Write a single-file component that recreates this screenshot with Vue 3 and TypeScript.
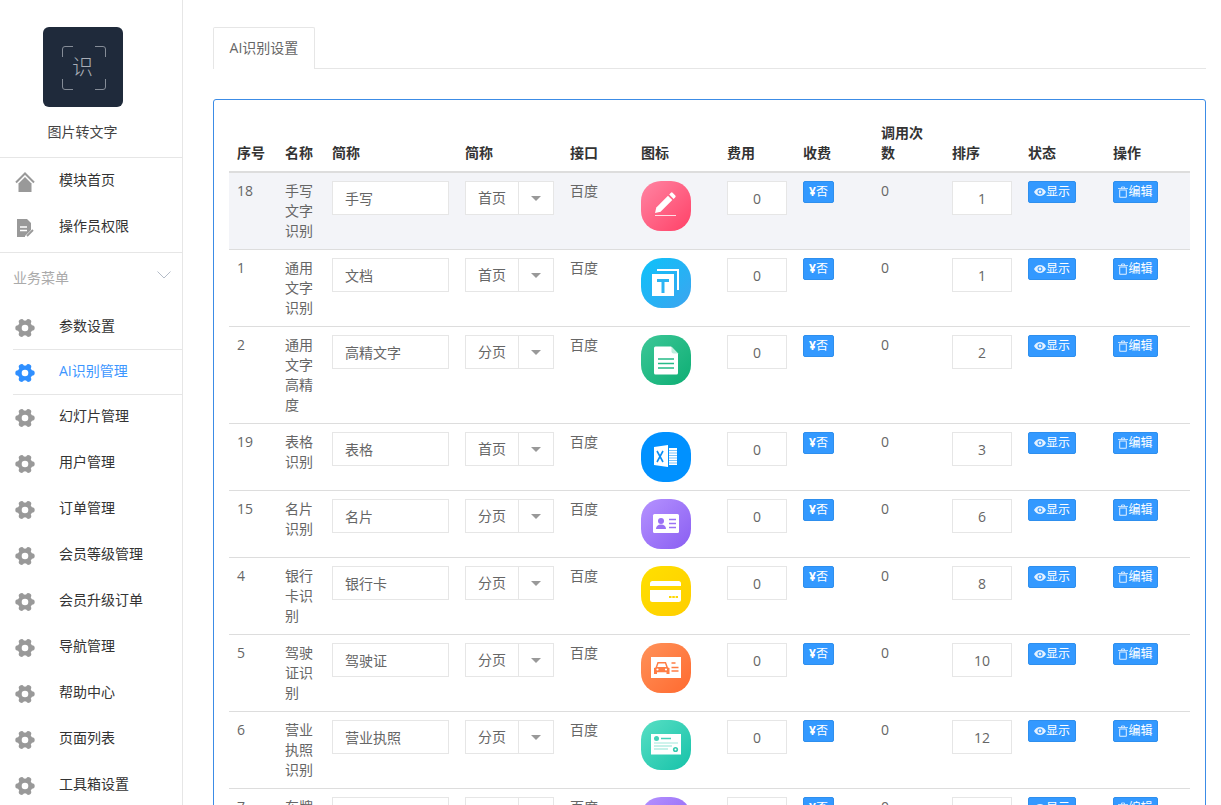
<script setup lang="ts">
interface Row {
  id: number
  name: string
  short: string
  page: string
  icon: string
  sort: number
}

const rows: Row[] = [
  { id: 18, name: '手写文字识别', short: '手写', page: '首页', icon: 'pen', sort: 1 },
  { id: 1, name: '通用文字识别', short: '文档', page: '首页', icon: 'text', sort: 1 },
  { id: 2, name: '通用文字高精度', short: '高精文字', page: '分页', icon: 'doc', sort: 2 },
  { id: 19, name: '表格识别', short: '表格', page: '首页', icon: 'excel', sort: 3 },
  { id: 15, name: '名片识别', short: '名片', page: '分页', icon: 'card', sort: 6 },
  { id: 4, name: '银行卡识别', short: '银行卡', page: '分页', icon: 'bank', sort: 8 },
  { id: 5, name: '驾驶证识别', short: '驾驶证', page: '分页', icon: 'car', sort: 10 },
  { id: 6, name: '营业执照识别', short: '营业执照', page: '分页', icon: 'biz', sort: 12 },
  { id: 7, name: '车牌识别', short: '车牌', page: '分页', icon: 'plate', sort: 14 }
]

const menu = ['参数设置', 'AI识别管理', '幻灯片管理', '用户管理', '订单管理', '会员等级管理', '会员升级订单', '导航管理', '帮助中心', '页面列表', '工具箱设置']
const columns = ['序号', '名称', '简称', '简称', '接口', '图标', '费用', '收费', '调用次数', '排序', '状态', '操作']
const widths = [48, 47, 133, 105, 71, 86, 76, 78, 71, 76, 85, 85]
const lobes = [0, 60, 120, 180, 240, 300]
</script>

<template>
  <div class="page">
    <aside class="side">
      <div class="brand">
        <div class="logo">
          <svg class="logo-frame" viewBox="0 0 44 44" fill="none" stroke="#858c97" stroke-width="1">
            <path d="M.5 11V3a2.5 2.5 0 0 1 2.500-2.500H11M33 .5h8A2.500 2.500 0 0 1 43.500 3v8M43.500 33v8a2.500 2.500 0 0 1-2.500 2.500H33M11 43.500H3A2.500 2.500 0 0 1 .5 41v-8" />
          </svg>
          <span class="logo-char">识</span>
        </div>
        <div class="brand-name">图片转文字</div>
      </div>

      <div class="group">
        <div class="item">
          <svg class="mi" viewBox="0 0 20 20">
            <path d="M1 10.500 10 1.500l9 9" fill="none" stroke="#999" stroke-width="2" />
            <path d="M3.500 11.500 10 5l6.500 6.500V20h-13z" fill="#999" />
          </svg>
          <span class="lbl">模块首页</span>
        </div>
        <div class="item">
          <svg class="mi" viewBox="0 0 20 20">
            <path d="M2 1h10l4 4v7l-6 6v1H2z" fill="#999" />
            <path d="M5 9h7M5 12.500h7" stroke="#fff" stroke-width="1.500" />
            <path d="M12 18l6-6" stroke="#999" stroke-width="1.800" />
          </svg>
          <span class="lbl">操作员权限</span>
        </div>
      </div>

      <div class="section">
        <span class="sec-lbl">业务菜单</span>
        <svg class="chev" viewBox="0 0 14 8" fill="none" stroke="#b4bcc8" stroke-width="1">
          <path d="M.5.5 7 7l6.500-6.500" />
        </svg>
      </div>

      <div
        v-for="(label, i) in menu"
        :key="label"
        class="item"
        :class="{ active: i === 1, after: i === 2 }"
      >
        <svg class="mi" viewBox="0 0 20 20">
          <circle cx="10" cy="10" r="7.400" />
          <circle v-for="a in lobes" :key="a" cx="10" cy="10" r="2.700" :transform="`rotate(${a} 10 10) translate(7 0)`" />
          <circle class="hole" cx="10" cy="10" r="3.300" />
        </svg>
        <span class="lbl">{{ label }}</span>
      </div>
    </aside>

    <main class="main">
      <div class="tabs">
        <div class="tab">AI识别设置</div>
      </div>

      <section class="card">
        <table class="grid">
          <colgroup>
            <col v-for="(w, i) in widths" :key="i" :width="w" />
          </colgroup>
          <thead>
            <tr>
              <th v-for="(c, i) in columns" :key="i">{{ c }}</th>
            </tr>
          </thead>
          <tbody>
            <tr v-for="r in rows" :key="r.id">
              <td>{{ r.id }}</td>
              <td>{{ r.name }}</td>
              <td><input class="field wide" :value="r.short" /></td>
              <td>
                <div class="select">
                  <span class="select-val">{{ r.page }}</span>
                  <span class="select-btn"><i class="caret"></i></span>
                </div>
              </td>
              <td>百度</td>
              <td>
                <div class="app" :class="`app-${r.icon}`">
                  <svg viewBox="0 0 50 50" width="50" height="50">
                    <g v-if="r.icon === 'pen'">
                      <path d="M14 32l1.300-5.600L27 14.700l4.300 4.300L19.600 30.700z" fill="#fff" />
                      <path d="M28.200 13.500l1.700-1.700a1.200 1.200 0 0 1 1.700 0l2.700 2.700a1.200 1.200 0 0 1 0 1.700l-1.700 1.700z" fill="#fff" />
                      <path d="M14 34.500h21" stroke="#fff" stroke-opacity=".8" stroke-width="1.200" />
                    </g>
                    <g v-else-if="r.icon === 'text'">
                      <path d="M16 12h21v20" fill="none" stroke="#fff" stroke-width="2" />
                      <rect x="11" y="16" width="22" height="22" fill="#fff" />
                      <path d="M16 21h12v3h-4.500v11h-3V24H16z" fill="#2bb4f4" />
                    </g>
                    <g v-else-if="r.icon === 'doc'">
                      <path d="M13 13a1.500 1.500 0 0 1 1.500-1.500H30l7 7V38a1.500 1.500 0 0 1-1.500 1.500h-21A1.500 1.500 0 0 1 13 38z" fill="#fff" />
                      <path d="M30.500 11.500v5a2 2 0 0 0 2 2h4.500z" fill="#bfeedd" />
                      <path d="M17 24h16M17 28.500h16M17 33h16" stroke="#25bb87" stroke-width="1.500" />
                    </g>
                    <g v-else-if="r.icon === 'excel'">
                      <path d="M13 15l14-2v22l-14-2z" fill="#fff" />
                      <path d="M16 19l6 11M22 19l-6 11" stroke="#0b8ff5" stroke-width="1.600" />
                      <path d="M28 16h8v17h-8z" fill="#fff" />
                      <path d="M28 18.500h8M28 21h8M28 23.500h8M28 26h8M28 28.500h8M28 31h8" stroke="#7cc4fb" stroke-width="1" />
                    </g>
                    <g v-else-if="r.icon === 'card' || r.icon === 'plate'">
                      <rect x="12" y="15" width="26" height="19" rx="1.500" fill="#fff" />
                      <circle cx="20" cy="22" r="3" fill="#9a71f5" />
                      <path d="M15 30c0-3 2-4.500 5-4.500s5 1.500 5 4.500z" fill="#9a71f5" />
                      <path d="M28 20.500h7M28 24.500h7M28 28.500h7" stroke="#9a71f5" stroke-width="1.500" />
                    </g>
                    <g v-else-if="r.icon === 'bank'">
                      <rect x="9" y="15" width="31" height="21" rx="2.500" fill="#fff" />
                      <rect x="9" y="20" width="31" height="4" fill="#ffd800" />
                      <path d="M28 31h9" stroke="#ffd800" stroke-width="2" stroke-dasharray="2.500 .8" />
                    </g>
                    <g v-else-if="r.icon === 'car'">
                      <rect x="10" y="14" width="30" height="21" fill="#fff" />
                      <path d="M13 31v-6l1.500-.5 2-5.500h8.500l2 5.500 1.500.5v6h-3v-1.800h-9.500V31z" fill="#ff7d45" />
                      <path d="M17.500 20.500h6.500l1.200 3.500h-9z" fill="#fff" />
                      <circle cx="16.500" cy="26.500" r="1.100" fill="#fff" />
                      <circle cx="25" cy="26.500" r="1.100" fill="#fff" />
                      <path d="M30.500 20h4M30.500 24.500h7M30.500 28h7" stroke="#ff7d45" stroke-width="1.400" />
                    </g>
                    <g v-else>
                      <rect x="10" y="14" width="30" height="20.500" fill="#fff" />
                      <circle cx="15.500" cy="18.500" r="2.500" fill="#45d2b8" />
                      <path d="M20 18.500h10" stroke="#45d2b8" stroke-width="1.500" />
                      <path d="M13 23h24" stroke="#9fe8da" stroke-width="1" />
                      <path d="M13 26h18M13 29h14" stroke="#c6f1e9" stroke-width="2" />
                      <circle cx="34.500" cy="29.500" r="2.600" fill="#35c9ae" />
                      <circle cx="34.500" cy="29.500" r="1" fill="#fff" />
                    </g>
                  </svg>
                </div>
              </td>
              <td><input class="field num" value="0" /></td>
              <td><span class="btn btn-fee"><b>¥</b>否</span></td>
              <td>0</td>
              <td><input class="field num" :value="r.sort" /></td>
              <td>
                <span class="btn btn-show">
                  <svg class="bi" viewBox="0 0 12 10" width="12" height="10">
                    <path fill-rule="evenodd" d="M0 5c1.500-2.700 3.500-4 6-4s4.500 1.300 6 4c-1.500 2.700-3.500 4-6 4S1.500 7.700 0 5zm6-2.500a2.500 2.500 0 1 0 0 5 2.500 2.500 0 0 0 0-5z" fill="#e4f1ff" />
                    <circle cx="6" cy="5" r="1.400" fill="#e4f1ff" />
                  </svg>显示
                </span>
              </td>
              <td>
                <span class="btn btn-edit">
                  <svg class="bi" viewBox="0 0 10 12" width="10" height="12">
                    <path d="M0 2.500h10M3.500 2.500V1h3v1.500" fill="none" stroke="#e4f1ff" stroke-width=".8" />
                    <path d="M1.200 3.500h7.600V11a.8.8 0 0 1-.8.8H2a.8.8 0 0 1-.8-.8zM2.200 4.500v6.300h5.600V4.500z" fill="#e4f1ff" fill-rule="evenodd" />
                  </svg>编辑
                </span>
              </td>
            </tr>
          </tbody>
        </table>
      </section>
    </main>
  </div>
</template>

<style>
html,
body {
  margin: 0;
  overflow: hidden;
  background: #fff;
}
</style>

<style scoped>
.page {
  display: flex;
  height: 805px;
  overflow: hidden;
  font-family: "Open Sans", "Noto Sans CJK SC", "Liberation Sans", sans-serif;
  font-size: 14px;
  color: #333;
}

.side {
  flex: 0 0 183px;
  box-sizing: border-box;
  border-right: 1px solid #e6e6e6;
  height: 805px;
  overflow: hidden;
}

.brand {
  display: flex;
  flex-direction: column;
  align-items: center;
  box-sizing: border-box;
  height: 158px;
  padding: 27px 18px 0 0;
  margin-right: -1px;
  border-bottom: 1px solid #e6e6e6;
}

.logo {
  position: relative;
  display: flex;
  align-items: center;
  justify-content: center;
  width: 80px;
  height: 80px;
  border-radius: 6px;
  background: #1f2a3b;
}

.logo-frame {
  position: absolute;
  left: 19px;
  top: 19px;
  width: 44px;
  height: 44px;
}

.logo-char {
  margin-bottom: 2px;
  font-size: 21px;
  line-height: 26px;
  font-weight: 300;
  color: #a8adb6;
}

.brand-name {
  margin-top: 16px;
  line-height: 18px;
  color: #444;
}

.group {
  padding-bottom: 2px;
  margin-right: -1px;
  border-bottom: 1px solid #e6e6e6;
}

.item {
  display: flex;
  align-items: center;
  box-sizing: border-box;
  height: 46px;
  padding-left: 15px;
  color: #333;
}

.lbl {
  margin-bottom: 4px;
}

.mi {
  flex: none;
  width: 20px;
  height: 20px;
  margin: 2px 24px 0 0;
  fill: #999;
}

.hole {
  fill: #fff;
}

.active {
  margin: -1px -1px 0 13px;
  padding-left: 2px;
  border-top: 1px solid #e6e6e6;
  border-bottom: 1px solid #e6e6e6;
  color: #3c96ff;
}

.active .mi {
  fill: #2f8fff;
}

.after {
  margin-top: -1px;
}

.section {
  display: flex;
  align-items: center;
  justify-content: space-between;
  box-sizing: border-box;
  height: 51px;
  padding: 0 11px 0 13px;
  color: #aaa;
}

.sec-lbl {
  margin-bottom: 3px;
}

.chev {
  width: 14px;
  height: 8px;
  margin-bottom: 8px;
}

.main {
  flex: 1;
  min-width: 0;
  padding: 27px 15px 0 30px;
}

.tabs {
  height: 41px;
  border-bottom: 1px solid #e6e6e6;
}

.tab {
  box-sizing: border-box;
  width: 102px;
  height: 42px;
  line-height: 40px;
  text-align: center;
  background: #fff;
  border: 1px solid #e6e6e6;
  border-bottom: none;
  border-radius: 2px 2px 0 0;
  color: #666;
}

.card {
  margin-top: 30px;
  padding: 15px;
  border: 1px solid #3c8ce6;
  border-radius: 3px;
}

.grid {
  width: 961px;
  table-layout: fixed;
  border-collapse: collapse;
  color: #666;
  line-height: 20px;
}

.grid th {
  padding: 8px;
  text-align: left;
  vertical-align: bottom;
  color: #333;
  font-weight: 700;
  border-bottom: 2px solid #ddd;
}

.grid td {
  padding: 8px;
  vertical-align: top;
  border-bottom: 1px solid #ddd;
}

.grid tbody tr:first-child {
  background: #f3f4f8;
}

.field {
  display: block;
  box-sizing: border-box;
  height: 34px;
  padding: 0 12px 1px;
  border: 1px solid #e6e6e6;
  background: #fff;
  outline: none;
  font: inherit;
  color: #666;
}

.wide {
  width: 117px;
}

.num {
  width: 60px;
  padding-bottom: 0;
  text-align: center;
}

.select {
  display: flex;
  box-sizing: border-box;
  width: 89px;
  height: 34px;
  border: 1px solid #e6e6e6;
  background: #fff;
  line-height: 32px;
}

.select-val {
  flex: 0 0 53px;
  box-sizing: border-box;
  padding-left: 12px;
  border-right: 1px solid #e6e6e6;
}

.select-btn {
  flex: 1;
  display: flex;
  align-items: center;
  justify-content: center;
}

.caret {
  width: 0;
  height: 0;
  border-style: solid;
  border-width: 5px 5px 0;
  border-color: #999 transparent transparent;
}

.app {
  width: 50px;
  height: 50px;
  border-radius: 20px;
  overflow: hidden;
}

.app svg {
  display: block;
}

.app-pen {
  background: linear-gradient(135deg, #ff85a3, #ff4167);
}

.app-text {
  border-radius: 21px;
  background: linear-gradient(135deg, #0cc2fa, #3da4ef);
}

.app-doc {
  background: linear-gradient(135deg, #3cc797, #0eae74);
}

.app-excel {
  border-radius: 22px;
  background: #0091ff;
}

.app-card,
.app-plate {
  background: linear-gradient(135deg, #b592ff, #8a5ef2);
}

.app-bank {
  background: linear-gradient(135deg, #ffe000, #ffce00);
}

.app-car {
  background: linear-gradient(135deg, #ff9259, #ff6a30);
}

.app-biz {
  background: linear-gradient(135deg, #58dfc4, #17c2a9);
}

.btn {
  display: inline-flex;
  align-items: center;
  justify-content: center;
  box-sizing: border-box;
  height: 22px;
  vertical-align: top;
  border: 1px solid #2e8fee;
  border-radius: 2px;
  background: #3399ff;
  color: #fff;
  font-size: 12px;
  line-height: 20px;
  white-space: nowrap;
}

.btn-fee {
  width: 31px;
}

.btn-fee b {
  font-weight: 700;
}

.btn-show {
  width: 48px;
}

.btn-edit {
  width: 45px;
}

.bi {
  flex: none;
}
</style>
